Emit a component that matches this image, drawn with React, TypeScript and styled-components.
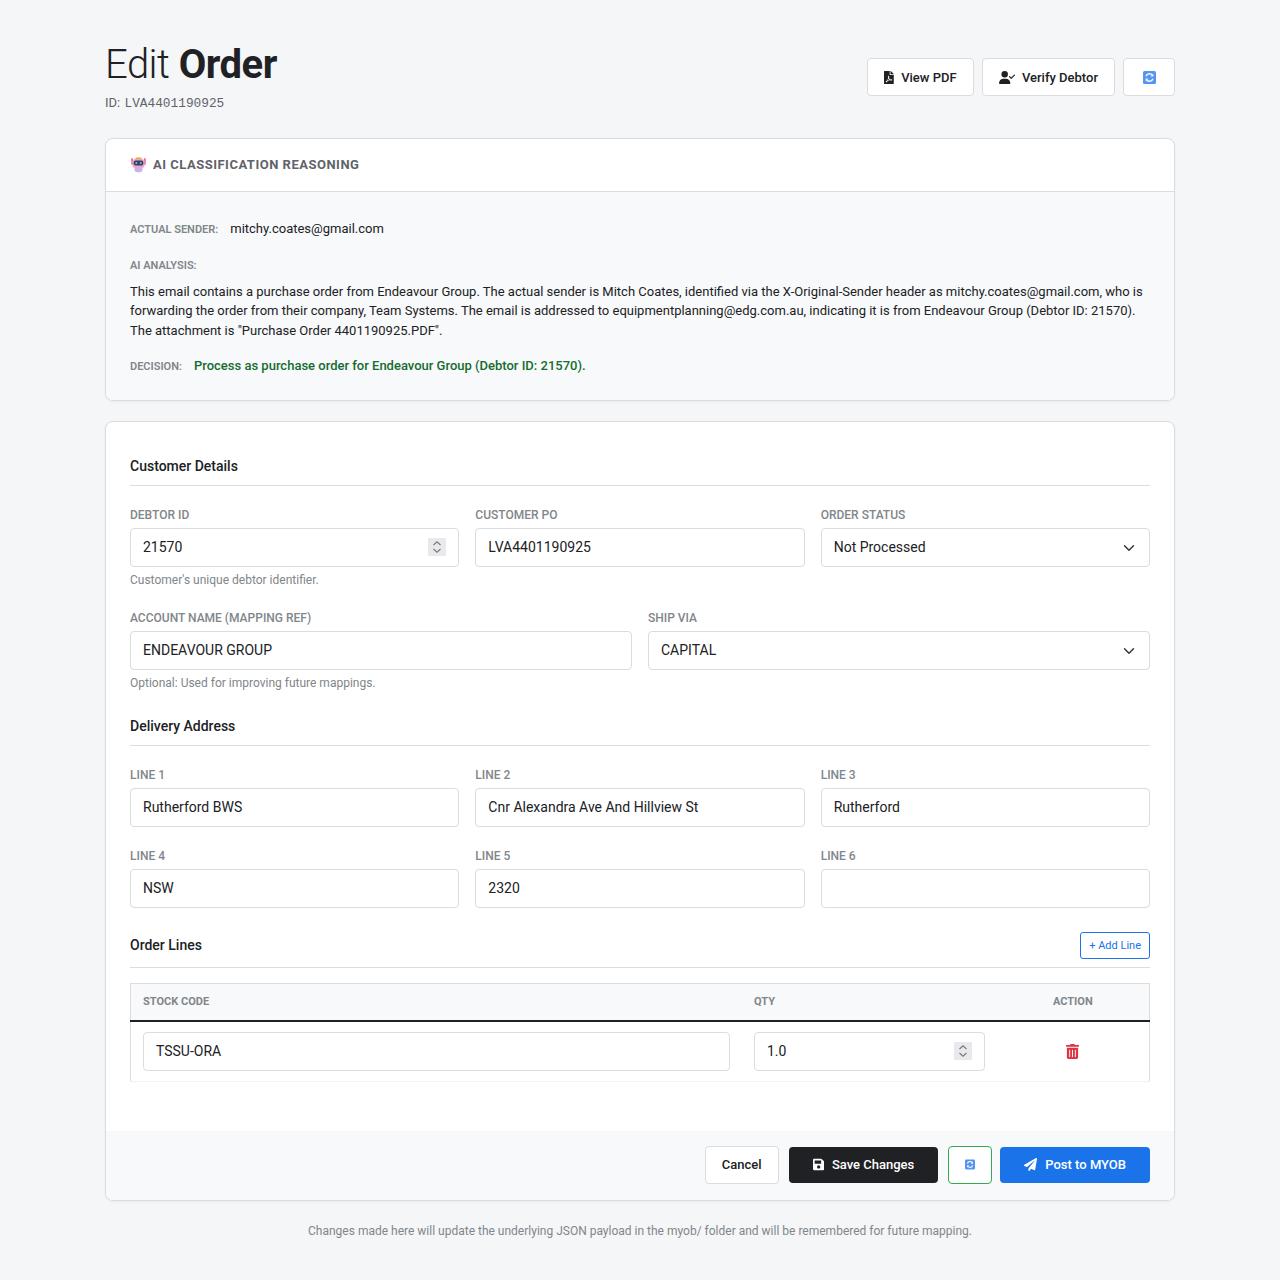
import React from "react";
import styled, { createGlobalStyle } from "styled-components";
import { FaFilePdf, FaSave, FaPaperPlane, FaTrashAlt } from "react-icons/fa";
import { FaUserCheck } from "react-icons/fa6";

const Global = createGlobalStyle`
  * { box-sizing: border-box; }
  html, body { margin: 0; padding: 0; background: #f5f6f8; }
  body { font-family: Roboto, "Liberation Sans", sans-serif; color: #202124; font-size: 14px; }
`;

const Page = styled.div`
  width: 1070px;
  margin: 0 auto;
  padding: 41px 0 40px;
`;
const Head = styled.header`
  display: flex;
  justify-content: space-between;
  align-items: center;
  margin-bottom: 25px;
`;
const TitleBlock = styled.div`
  display: flex;
  flex-direction: column;
`;
const Title = styled.h1`
  margin: 0;
  font-size: 40px;
  line-height: 48px;
  font-weight: 300;
  letter-spacing: -0.5px;
  b { font-weight: 700; }
`;
const OrderId = styled.div`
  margin-top: 4px;
  font-size: 13px;
  line-height: 19px;
  color: #5f6368;
`;
const Mono = styled.span`
  font-family: "Liberation Mono", monospace;
  font-size: 12.8px;
  margin-left: 1px;
`;
const Actions = styled.div`
  display: flex;
  gap: 8px;
`;
const Button = styled.button<{ $kind?: "light" | "dark" | "primary" | "success"; $wide?: boolean; $spaced?: boolean }>`
  display: inline-flex;
  align-items: center;
  justify-content: center;
  gap: ${(p) => (p.$wide ? "8px" : "7px")};
  height: ${(p) => (p.$wide ? "36px" : "38px")};
  padding: 0 ${(p) => (p.$wide ? "24px" : "16px")};
  margin-left: ${(p) => (p.$spaced ? "2px" : "0")};
  border-radius: 4px;
  font: 500 13px Roboto, sans-serif;
  border: ${(p) => (p.$wide ? "0" : `1px solid ${p.$kind === "success" ? "#34a853" : "#dadce0"}`)};
  background: ${(p) => (p.$kind === "dark" ? "#202124" : p.$kind === "primary" ? "#1a73e8" : "#fff")};
  color: ${(p) => (p.$kind === "dark" || p.$kind === "primary" ? "#fff" : "#202124")};
`;
const PdfIcon = styled(FaFilePdf)`
  width: 9.75px;
  height: 13px;
`;
const VerifyIcon = styled(FaUserCheck)`
  width: 16.25px;
  height: 13px;
`;
const SaveIcon = styled(FaSave)`
  width: 11.4px;
  height: 13px;
`;
const SendIcon = styled(FaPaperPlane)`
  width: 13px;
  height: 13px;
`;
const IconSlot = styled.span<{ $w: number }>`
  display: inline-flex;
  justify-content: center;
  width: ${(p) => p.$w}px;
`;
const Card = styled.section`
  background: #fff;
  border: 1px solid #dadce0;
  border-radius: 8px;
  box-shadow: 0 1px 3px rgba(0, 0, 0, 0.05);
  overflow: hidden;
  margin-bottom: 20px;
`;
const CardHead = styled.div`
  height: 53px;
  padding: 0 24px 1px;
  display: flex;
  align-items: center;
  gap: 6px;
  font-size: 13px;
  font-weight: 700;
  letter-spacing: 0.5px;
  color: #5f6368;
  border-bottom: 1px solid #dadce0;
`;
const CardBody = styled.div`
  background: #f8f9fa;
  padding: 27px 24px 24px;
  font-size: 13px;
  line-height: 19.5px;
`;
const Row = styled.div<{ $mb?: number }>`
  display: flex;
  align-items: baseline;
  gap: 12px;
  margin-bottom: ${(p) => p.$mb ?? 0}px;
`;
const Tag = styled.span`
  font-size: 11px;
  font-weight: 600;
  color: #80868b;
  text-transform: uppercase;
`;
const BlockTag = styled(Tag)`
  display: block;
  margin-bottom: 6.5px;
`;
const Analysis = styled.p`
  margin: 0 0 15.5px;
`;
const Decision = styled.span`
  font-weight: 500;
  color: #146c2e;
`;
const Form = styled.div`
  padding: 34px 24px 49px;
`;
const SectionHead = styled.div<{ $tight?: boolean; $top?: number }>`
  display: flex;
  justify-content: space-between;
  align-items: center;
  font-size: 14px;
  font-weight: 500;
  margin-top: ${(p) => p.$top ?? 0}px;
  padding-bottom: ${(p) => (p.$tight ? 8 : 9)}px;
  border-bottom: 1px solid #dadce0;
  margin-bottom: ${(p) => (p.$tight ? 15 : 21)}px;
`;
const SectionTitle = styled.span<{ $lift?: boolean }>`
  line-height: 20px;
  margin-bottom: ${(p) => (p.$lift ? "1px" : "0")};
`;
const Grid = styled.div<{ $cols: number }>`
  display: grid;
  grid-template-columns: repeat(${(p) => p.$cols}, 1fr);
  column-gap: 16px;
  row-gap: 21px;
  margin-bottom: 22px;
`;
const Field = styled.label`
  display: block;
`;
const Label = styled.div`
  font-size: 12px;
  font-weight: 500;
  line-height: 16px;
  margin-bottom: 5px;
  color: #80868b;
  text-transform: uppercase;
`;
const inputCss = `
  display: block;
  width: 100%;
  height: 39px;
  padding: 0 12px 2px;
  background-color: #fff;
  border: 1px solid #dadce0;
  border-radius: 4px;
  font: 400 14px Roboto, sans-serif;
  color: #202124;
  outline: none;
  &::-webkit-inner-spin-button {
    -webkit-appearance: none;
    appearance: none;
    opacity: 1;
    width: 18px;
    height: 18px;
    background: #e9e9ed url("data:image/svg+xml,%3csvg xmlns='http://www.w3.org/2000/svg' viewBox='0 0 18 18'%3e%3cpath fill='none' stroke='%23777' stroke-width='1.1' d='M5.5 7 9 3.8 12.5 7M5.5 11 9 14.2 12.5 11'/%3e%3c/svg%3e") center / 18px 18px no-repeat;
  }
`;
const Input = styled.input`${inputCss}`;
const CellInput = styled(Input)`
  padding-bottom: 0;
`;
const Select = styled.select`
  ${inputCss}
  appearance: none;
  background-image: url("data:image/svg+xml,%3csvg xmlns='http://www.w3.org/2000/svg' viewBox='0 0 16 16'%3e%3cpath fill='none' stroke='%23343a40' stroke-linecap='round' stroke-linejoin='round' stroke-width='2' d='m2 5 6 6 6-6'/%3e%3c/svg%3e");
  background-repeat: no-repeat;
  background-position: right 14px center;
  background-size: 12px 12px;
`;
const Hint = styled.div`
  margin-top: 5px;
  font-size: 12px;
  line-height: 16px;
  color: #80868b;
`;
const AddLine = styled.button`
  height: 27px;
  padding: 0 8px;
  background: #fff;
  border: 1px solid #1a73e8;
  border-radius: 3px;
  color: #1a73e8;
  font: 400 11px Roboto, sans-serif;
`;
const Table = styled.table`
  width: 100%;
  border-collapse: collapse;
  table-layout: fixed;
`;
const Th = styled.th<{ $w: number; $center?: boolean }>`
  width: ${(p) => p.$w}%;
  height: 37px;
  padding: 0 12px;
  background: #f8f9fa;
  border: 1px solid #dadce0;
  border-width: 1px 0 2px;
  border-bottom-color: #202124;
  font-size: 11px;
  font-weight: 700;
  color: #80868b;
  text-transform: uppercase;
  text-align: ${(p) => (p.$center ? "center" : "left")};
  &:first-child { border-left-width: 1px; }
  &:last-child { border-right-width: 1px; }
`;
const Td = styled.td<{ $center?: boolean }>`
  padding: 10px 12px;
  border-bottom: 1px solid #f1f3f4;
  text-align: ${(p) => (p.$center ? "center" : "left")};
  &:first-child { border-left: 1px solid #dadce0; }
  &:last-child { border-right: 1px solid #dadce0; }
`;
const Trash = styled.span`
  display: inline-flex;
  vertical-align: middle;
  color: #dc3545;
  font-size: 15px;
  margin-bottom: 1px;
`;
const CardFoot = styled.div`
  background: #f8f9fa;
  padding: 15px 24px 16px;
  display: flex;
  justify-content: flex-end;
  align-items: center;
  gap: 8px;
`;
const Note = styled.p`
  margin: 0;
  text-align: center;
  font-size: 12px;
  line-height: 20px;
  color: #80868b;
`;

const SyncIcon = () => (
  <svg width="13" height="13" viewBox="0 0 13 13" aria-hidden="true">
    <rect width="13" height="13" rx="1.5" fill="#5595f0" />
    <path d="M3 5.2A3.6 3.6 0 0 1 9.4 4.2" fill="none" stroke="#eef4fe" strokeWidth="1.5" />
    <path d="M10.4 2.4v3H7.4z" fill="#eef4fe" />
    <path d="M10 7.8A3.6 3.6 0 0 1 3.6 8.8" fill="none" stroke="#eef4fe" strokeWidth="1.5" />
    <path d="M2.6 10.6v-3h3z" fill="#eef4fe" />
  </svg>
);

const RobotIcon = () => (
  <svg width="17" height="16" viewBox="0 0 16 16" aria-hidden="true">
    <rect x="5" y="0.5" width="6" height="1.6" rx="0.6" fill="#f5a623" />
    <rect x="0.8" y="1" width="1.6" height="7" rx="0.8" fill="#ee5f95" />
    <rect x="13.6" y="1" width="1.6" height="7" rx="0.8" fill="#ee5f95" />
    <rect x="2" y="2" width="12" height="9" rx="3" fill="#e9a5cf" />
    <rect x="3.2" y="3.6" width="9.6" height="5" rx="2" fill="#3a3f5c" />
    <rect x="4.8" y="5" width="2" height="2" rx="1" fill="#6fc8f2" />
    <rect x="9.2" y="5" width="2" height="2" rx="1" fill="#6fc8f2" />
    <path d="M4 11h8v1.6A2.6 2.6 0 0 1 9.4 15.2H6.6A2.6 2.6 0 0 1 4 12.6z" fill="#c9b4ea" />
  </svg>
);

export default function App() {
  return (
    <Page>
      <Global />
      <Head>
        <TitleBlock>
          <Title>Edit <b>Order</b></Title>
          <OrderId>ID: <Mono>LVA4401190925</Mono></OrderId>
        </TitleBlock>
        <Actions>
          <Button><PdfIcon />View PDF</Button>
          <Button><VerifyIcon />Verify Debtor</Button>
          <Button><IconSlot $w={18}><SyncIcon /></IconSlot></Button>
        </Actions>
      </Head>

      <Card>
        <CardHead><RobotIcon />AI CLASSIFICATION REASONING</CardHead>
        <CardBody>
          <Row $mb={16}><Tag>Actual Sender:</Tag><span>mitchy.coates@gmail.com</span></Row>
          <BlockTag>AI Analysis:</BlockTag>
          <Analysis>
            This email contains a purchase order from Endeavour Group. The actual sender is Mitch Coates, identified via the X-Original-Sender header as mitchy.coates@gmail.com, who is forwarding the order from their company, Team Systems. The email is addressed to equipmentplanning@edg.com.au, indicating it is from Endeavour Group (Debtor ID: 21570). The attachment is "Purchase Order 4401190925.PDF".
          </Analysis>
          <Row><Tag>Decision:</Tag><Decision>Process as purchase order for Endeavour Group (Debtor ID: 21570).</Decision></Row>
        </CardBody>
      </Card>

      <Card>
        <Form>
          <SectionHead><SectionTitle>Customer Details</SectionTitle></SectionHead>
          <Grid $cols={3}>
            <Field>
              <Label>Debtor ID</Label>
              <Input type="number" defaultValue="21570" />
              <Hint>Customer's unique debtor identifier.</Hint>
            </Field>
            <Field><Label>Customer PO</Label><Input defaultValue="LVA4401190925" /></Field>
            <Field>
              <Label>Order Status</Label>
              <Select defaultValue="Not Processed"><option>Not Processed</option></Select>
            </Field>
          </Grid>
          <Grid $cols={2}>
            <Field>
              <Label>Account Name (Mapping Ref)</Label>
              <Input defaultValue="ENDEAVOUR GROUP" />
              <Hint>Optional: Used for improving future mappings.</Hint>
            </Field>
            <Field>
              <Label>Ship Via</Label>
              <Select defaultValue="CAPITAL"><option>CAPITAL</option></Select>
            </Field>
          </Grid>
          <SectionHead $top={25}><SectionTitle>Delivery Address</SectionTitle></SectionHead>
          <Grid $cols={3}>
            <Field><Label>Line 1</Label><Input defaultValue="Rutherford BWS" /></Field>
            <Field><Label>Line 2</Label><Input defaultValue="Cnr Alexandra Ave And Hillview St" /></Field>
            <Field><Label>Line 3</Label><Input defaultValue="Rutherford" /></Field>
            <Field><Label>Line 4</Label><Input defaultValue="NSW" /></Field>
            <Field><Label>Line 5</Label><Input defaultValue="2320" /></Field>
            <Field><Label>Line 6</Label><Input defaultValue="" /></Field>
          </Grid>
          <SectionHead $tight $top={24}>
            <SectionTitle $lift>Order Lines</SectionTitle>
            <AddLine>+ Add Line</AddLine>
          </SectionHead>
          <Table>
            <thead>
              <tr>
                <Th $w={60}>Stock Code</Th>
                <Th $w={25}>Qty</Th>
                <Th $w={15} $center>Action</Th>
              </tr>
            </thead>
            <tbody>
              <tr>
                <Td><CellInput defaultValue="TSSU-ORA" /></Td>
                <Td><CellInput type="number" defaultValue="1.0" /></Td>
                <Td $center><Trash><FaTrashAlt /></Trash></Td>
              </tr>
            </tbody>
          </Table>
        </Form>
        <CardFoot>
          <Button>Cancel</Button>
          <Button $kind="dark" $wide $spaced><SaveIcon />Save Changes</Button>
          <Button $kind="success" $spaced><IconSlot $w={10}><SyncIcon /></IconSlot></Button>
          <Button $kind="primary" $wide><SendIcon />Post to MYOB</Button>
        </CardFoot>
      </Card>
      <Note>Changes made here will update the underlying JSON payload in the myob/ folder and will be remembered for future mapping.</Note>
    </Page>
  );
}
